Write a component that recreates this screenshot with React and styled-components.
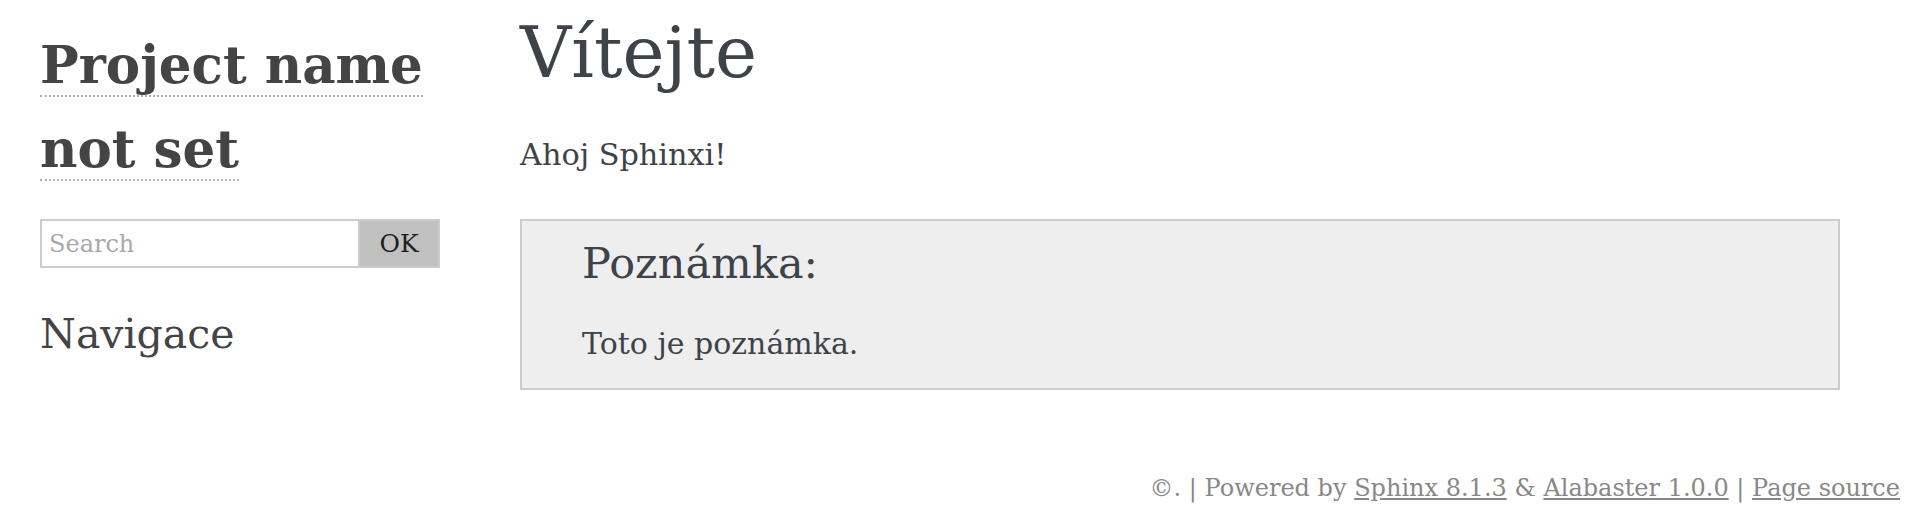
import React from 'react'
import styled, { createGlobalStyle } from 'styled-components'

const GlobalStyle = createGlobalStyle`
  html, body {
    margin: 0;
    padding: 0;
    background: #fff;
  }
  body {
    font-family: Georgia, "DejaVu Serif", serif;
    color: #3e4349;
  }
`

const Page = styled.div`
  padding: 0 28px 0 20px;
`

const Document = styled.div`
  display: flex;
  align-items: flex-start;
`

const Sidebar = styled.aside`
  width: 440px;
  box-sizing: border-box;
  padding: 23px 20px 0;
  color: #444;
`

const Logo = styled.h1`
  margin: 0;
  font-size: 51.5px;
  line-height: 84px;
  font-weight: bold;

  a {
    color: #444;
    text-decoration: none;
    border-bottom: 2px dotted #b0b0b0;
  }
`

const SearchForm = styled.form`
  display: flex;
  margin-top: 28px;
`

const SearchInput = styled.input`
  width: 80%;
  box-sizing: border-box;
  height: 49px;
  padding: 7px;
  border: 2px solid #ccc;
  font-family: inherit;
  font-size: 24px;
  color: #444;
  outline: none;

  &::placeholder {
    color: #a9a9a9;
  }
`

const SearchButton = styled.button`
  width: 20%;
  box-sizing: border-box;
  height: 49px;
  border: 2px solid #ccc;
  border-left: none;
  background: #c0c0c0;
  font-family: inherit;
  font-size: 25px;
  color: #1f1f1f;
  padding: 0;
`

const SideHeading = styled.h3`
  margin: 39px 0 0;
  font-size: 41px;
  line-height: 54px;
  font-weight: normal;
  color: #444;
`

const Body = styled.main`
  flex: 1;
  padding: 8px 60px 0;
`

const Title = styled.h1`
  margin: 0;
  font-size: 71px;
  line-height: 90px;
  font-weight: normal;
`

const Paragraph = styled.p`
  margin: 33px 0 0;
  font-size: 30.3px;
  line-height: 47px;
`

const Note = styled.div`
  margin-top: 41px;
  padding: 18px 60px 22px;
  background: #eee;
  border: 2px solid #ccc;
`

const NoteTitle = styled.p`
  margin: 0 0 35px;
  font-size: 43px;
  line-height: 48px;
`

const NoteText = styled.p`
  margin: 0;
  font-size: 30px;
  line-height: 44px;
`

const Footer = styled.footer`
  margin-top: 80px;
  text-align: right;
  font-size: 24px;
  line-height: 36px;
  color: #888;

  a {
    color: #888;
    text-decoration: underline;
  }
`

export default function App() {
  return (
    <>
      <GlobalStyle />
      <Page>
        <Document>
          <Sidebar>
            <Logo><a href="#">Project name</a><br /><a href="#">not set</a></Logo>
            <SearchForm onSubmit={e => e.preventDefault()}>
              <SearchInput type="text" placeholder="Search" />
              <SearchButton type="submit">OK</SearchButton>
            </SearchForm>
            <SideHeading>Navigace</SideHeading>
          </Sidebar>
          <Body>
            <Title>Vítejte</Title>
            <Paragraph>Ahoj Sphinxi!</Paragraph>
            <Note>
              <NoteTitle>Poznámka:</NoteTitle>
              <NoteText>Toto je poznámka.</NoteText>
            </Note>
          </Body>
        </Document>
        <Footer>
          ©. | Powered by <a href="#">Sphinx 8.1.3</a> &amp; <a href="#">Alabaster 1.0.0</a> | <a href="#">Page source</a>
        </Footer>
      </Page>
    </>
  )
}
